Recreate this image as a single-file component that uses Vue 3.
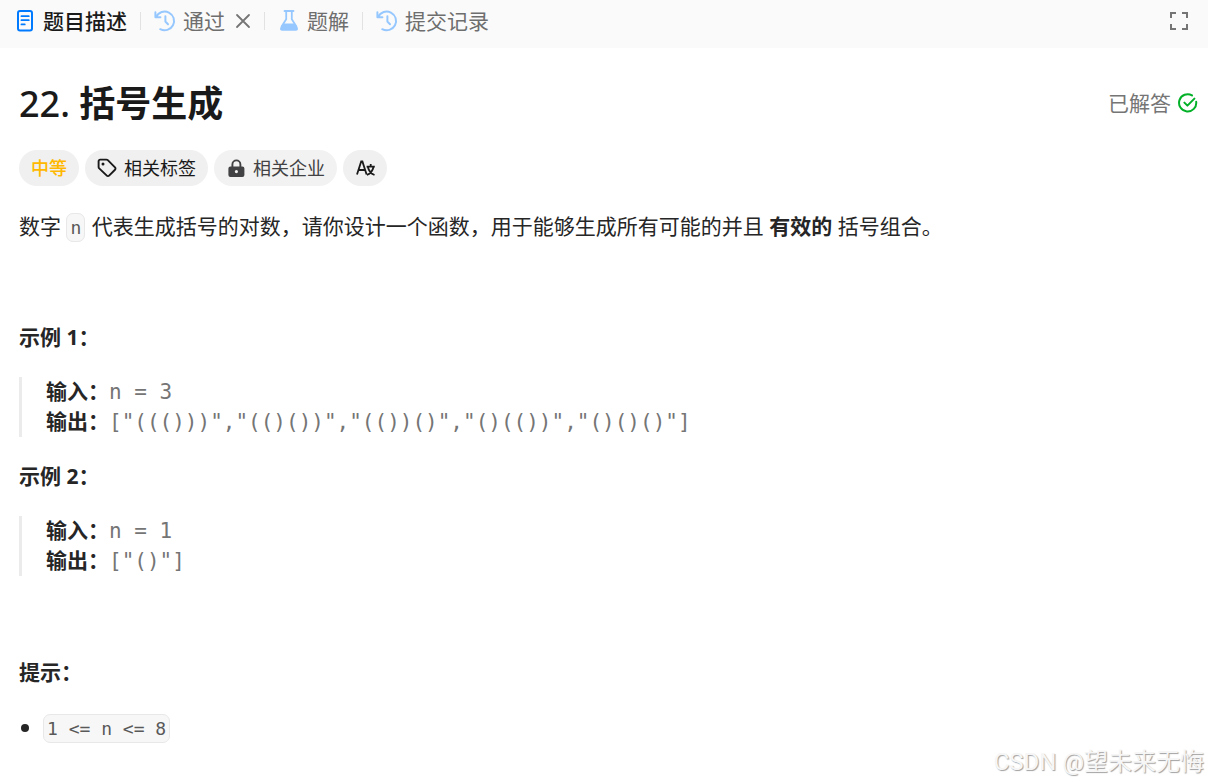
<script setup>
const examples = [
  { id: 1, input: 'n = 3', output: '["((()))","(()())","(())()","()(())","()()()"]' },
  { id: 2, input: 'n = 1', output: '["()"]' },
]
</script>

<template>
  <div class="page">
    <header class="tabs">
      <nav class="tab-list">
        <button class="tab active" type="button">
          <svg class="ico doc" viewBox="0 0 18 24" fill="none" stroke="#007aff" stroke-linecap="round">
            <rect x="2" y="2" width="14" height="19.4" rx="2" stroke-width="2" />
            <path d="M5.4 7.2h7.4M5.4 11.2h7.4M5.4 15.4h3.4" stroke-width="1.7" />
          </svg>
          <span>题目描述</span>
        </button>
        <i class="sep"></i>
        <div class="tab-wrap">
          <button class="tab" type="button">
            <svg class="ico" viewBox="0 0 24 24" fill="none" stroke="#96c8ff" stroke-width="2" stroke-linecap="round" stroke-linejoin="round">
              <path d="M1.400 3.200v5h5M2.200 7.800A9.400 9.400 0 1 1 6.200 20.200M11.400 7.200v5.300l2.600 2.700" />
            </svg>
            <span>通过</span>
          </button>
          <button class="close" type="button" aria-label="关闭">
            <svg viewBox="0 0 16 16" fill="none" stroke="#757575" stroke-width="1.8" stroke-linecap="round">
              <path d="M2 2l12 12M14 2L2 14" />
            </svg>
          </button>
        </div>
        <i class="sep"></i>
        <button class="tab" type="button">
          <svg class="ico" viewBox="0 0 24 24">
            <path d="M6.500 2h9M8.200 2.400v7.800L3.600 17.600M13.800 2.400v7.800l4.600 7.400" fill="none" stroke="#96c8ff" stroke-width="1.800" stroke-linecap="round" />
            <path d="M5.200 14.400h11.600l2.800 4.200c1 1.700.1 3.200-1.800 3.200H4.200c-1.900 0-2.800-1.500-1.800-3.200z" fill="#96c8ff" />
          </svg>
          <span>题解</span>
        </button>
        <i class="sep"></i>
        <button class="tab" type="button">
          <svg class="ico" viewBox="0 0 24 24" fill="none" stroke="#96c8ff" stroke-width="2" stroke-linecap="round" stroke-linejoin="round">
            <path d="M1.400 3.200v5h5M2.200 7.800A9.400 9.400 0 1 1 6.200 20.200M11.400 7.200v5.300l2.600 2.700" />
          </svg>
          <span>提交记录</span>
        </button>
      </nav>
      <button class="expand" type="button" aria-label="全屏">
        <svg viewBox="0 0 20 20" fill="none" stroke="#757575" stroke-width="2">
          <path d="M2 7V2h5M13 2h5v5M18 13v5h-5M7 18H2v-5" />
        </svg>
      </button>
    </header>

    <main class="content">
      <div class="title-row">
        <h1><span class="number">22.</span> 括号生成</h1>
        <div class="solved">
          <span>已解答</span>
          <svg viewBox="0 0 20 20" fill="none" stroke="#02b128" stroke-width="2" stroke-linecap="round" stroke-linejoin="round">
            <path d="M14 2.400A8.600 8.600 0 1 0 18.200 8.800M6.400 9.600l3 3L16.400 5.600" />
          </svg>
        </div>
      </div>

      <div class="pills">
        <span class="pill level">中等</span>
        <button class="pill" type="button">
          <svg class="tag" viewBox="0 0 20 20">
            <path d="M1.600 3.200a1.600 1.600 0 0 1 1.600-1.600h6.200a2 2 0 0 1 1.400.6l7.200 7.200a1.600 1.600 0 0 1 0 2.300l-5.900 5.900a1.600 1.600 0 0 1-2.300 0L2.200 10.400a2 2 0 0 1-.6-1.400z" fill="none" stroke="#1a1a1a" stroke-width="1.900" />
            <circle cx="6" cy="6" r="1.500" fill="#1a1a1a" />
          </svg>
          <span>相关标签</span>
        </button>
        <button class="pill company" type="button">
          <svg class="lock" viewBox="0 0 20 20">
            <path d="M6.400 9V6.400a4 4 0 0 1 8 0V9" fill="none" stroke="#424244" stroke-width="1.900" />
            <path fill-rule="evenodd" d="M4.400 8.400h12a2 2 0 0 1 2 2V17a2 2 0 0 1-2 2h-12a2 2 0 0 1-2-2v-6.600a2 2 0 0 1 2-2zM10.400 12a1.600 1.600 0 1 0 0 3.200 1.600 1.600 0 0 0 0-3.200z" fill="#424244" />
          </svg>
          <span>相关企业</span>
        </button>
        <button class="pill lang" type="button" aria-label="切换语言">
          <svg viewBox="0 0 20 20" fill="none" stroke="#1a1a1a" stroke-width="1.800">
            <path d="M2 16.500L6.200 3.500h1.200l4.200 13M3.500 12h6.600M11.600 8.600h8.200M15.700 6v2.600M12.900 9c.8 3.800 3.200 6.600 6.600 8M18.500 9c-.8 3.800-3.200 6.600-6.600 8" />
          </svg>
        </button>
      </div>

      <p>数字 <code>n</code> 代表生成括号的对数，请你设计一个函数，用于能够生成所有可能的并且 <strong>有效的</strong> 括号组合。</p>

      <section v-for="example in examples" :key="example.id" class="example">
        <h2>示例 {{ example.id }}：</h2>
        <pre><strong>输入：</strong>{{ example.input }}
<strong>输出：</strong>{{ example.output }}</pre>
      </section>

      <section class="hints">
        <h2>提示：</h2>
        <ul>
          <li><code>1 &lt;= n &lt;= 8</code></li>
        </ul>
      </section>
    </main>

    <div class="watermark">CSDN @望未来无悔</div>
  </div>
</template>

<style>
body {
  margin: 0;
  background: #fff;
}
</style>

<style scoped>
.page {
  position: relative;
  box-sizing: border-box;
  min-height: 100vh;
  font-family: "Noto Sans", "Noto Sans CJK SC", sans-serif;
  font-size: 21px;
  line-height: 30px;
  color: #262626;
}
button {
  border: 0;
  padding: 0;
  background: none;
  font: inherit;
  color: inherit;
  cursor: pointer;
}
svg {
  display: block;
  flex: none;
}
.tabs {
  display: flex;
  align-items: center;
  justify-content: space-between;
  height: 48px;
  padding: 0 19px 6px 16px;
  box-sizing: border-box;
  background: #fafafa;
}
.tab-list,
.tab-wrap {
  display: flex;
  align-items: center;
}
.tab-list {
  gap: 13px;
}
.tab-wrap {
  gap: 10px;
}
.tab {
  display: flex;
  align-items: center;
  gap: 5px;
  color: #6e6e6e;
  white-space: nowrap;
}
.tab.active {
  gap: 9px;
  color: #1a1a1a;
  font-weight: 500;
}
.ico {
  width: 24px;
  height: 24px;
}
.ico.doc {
  width: 18px;
}
.sep {
  width: 1px;
  height: 18px;
  background: #e2e2e2;
}
.close svg {
  width: 16px;
  height: 16px;
}
.expand svg {
  width: 20px;
  height: 20px;
}
.content {
  padding: 32px 10px 24px 19px;
}
.title-row {
  display: flex;
  align-items: center;
  justify-content: space-between;
}
h1 {
  margin: 0;
  font-size: 36px;
  line-height: 48px;
  font-weight: 600;
  color: #1a1a1a;
}
.number {
  font-weight: 500;
}
.solved {
  display: flex;
  align-items: center;
  gap: 7px;
  padding-bottom: 2px;
  color: #757575;
}
.solved svg {
  width: 20px;
  height: 20px;
}
.pills {
  display: flex;
  flex-wrap: wrap;
  gap: 6px;
  margin: 22px 0 25px;
  font-size: 18px;
}
.pill {
  display: flex;
  align-items: center;
  gap: 7px;
  height: 36px;
  padding: 0 12px;
  border-radius: 18px;
  background: #f0f0f0;
  color: #1a1a1a;
}
.pill.level {
  color: #ffb800;
  font-weight: 500;
}
.pill.company {
  background: #f2f2f2;
  color: #424244;
}
.pill svg {
  width: 20px;
  height: 20px;
}
p {
  margin: 0;
}
code,
pre {
  font-family: "DejaVu Sans Mono", "Noto Sans CJK SC", monospace;
}
code {
  margin: 0 1px 0 0;
  padding: 3px;
  border: 1px solid #e8e8e8;
  border-radius: 7px;
  background: #f7f7f7;
  font-size: 18px;
  line-height: 21px;
  color: #595959;
}
strong,
h2 {
  font-weight: 700;
  color: #262626;
}
strong {
  font-family: "Noto Sans", "Noto Sans CJK SC", sans-serif;
  line-height: 24px;
}
h2 {
  margin: 0;
  font-size: 21px;
  line-height: 30px;
}
.example {
  margin-top: 24px;
}
p + .example,
.hints {
  margin-top: 81px;
}
pre {
  margin: 25px 0 0;
  padding-left: 24px;
  border-left: 3px solid #ebebeb;
  color: #757575;
  white-space: pre-wrap;
}
ul {
  margin: 25px 0 0;
  padding: 0;
  list-style: none;
}
li {
  display: flex;
  align-items: center;
  gap: 14px;
  min-height: 32px;
  padding-left: 2px;
}
li::before {
  content: "";
  width: 8px;
  height: 8px;
  border-radius: 50%;
  background: #262626;
}
.watermark {
  position: absolute;
  right: 4px;
  bottom: 1px;
  font-family: Roboto, "Noto Sans CJK SC", sans-serif;
  font-size: 24px;
  line-height: 36px;
  color: #f6f6f6;
  text-shadow: 1px 1px 1px #a0a0a0;
}
</style>
